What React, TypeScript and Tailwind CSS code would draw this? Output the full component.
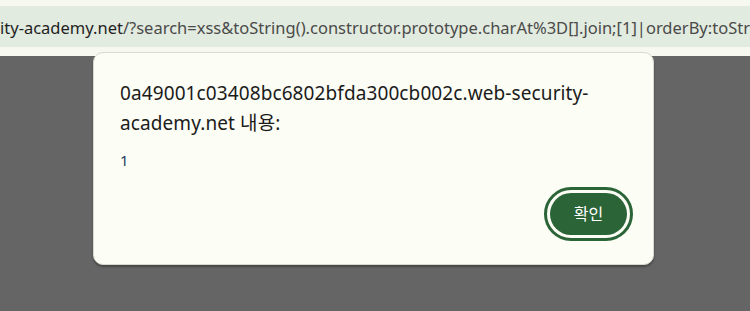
import React from 'react';

const font = '"Noto Sans", "Noto Sans CJK KR", sans-serif';

export default function App() {
  return (
    <div className="relative flex h-[311px] w-[750px] flex-col overflow-hidden bg-[#656565]" style={{ fontFamily: font }}>
      {/* browser chrome */}
      <div className="h-[6px] bg-[#f7f9f1]" />
      <div className="flex h-[41px] items-center overflow-hidden whitespace-nowrap bg-[#e2ebdf] pt-[3px] text-[16.5px]">
        <span className="text-[#1f1f1f]">ity-academy.net</span>
        <span className="text-[#4a4a4a]">/?search=xss&amp;toString().constructor.prototype.charAt%3D[].join;[1]|orderBy:toStr</span>
      </div>
      <div className="h-[9px] bg-[#f7f9f1]" />
      <div className="flex-1" />

      {/* alert dialog */}
      <div className="absolute left-[93px] top-[52px] flex h-[213px] w-[561px] flex-col rounded-[10px] border border-[#d9dacd] bg-[#fcfdf5] pl-[26px] pr-[20px] pt-[25px] pb-[23px] shadow-[0_2px_2px_rgba(0,0,0,0.3)]">
        <div className="text-[19px] leading-[30px] tracking-[0.1px] text-[#1b1b1b]">
          0a49001c03408bc6802bfda300cb002c.web-security-
          <br />
          academy.net 내용:
        </div>
        <div className="mt-[12px] text-[15px] leading-[20px] text-[#24405e]">1</div>
        <div className="mt-auto flex justify-end">
          <button className="flex h-[54px] w-[89px] items-center justify-center rounded-full border-[3px] border-[#2b6437] bg-[#fcfdf5] p-[3px]">
            <span className="flex h-full w-full items-center justify-center rounded-full bg-[#2b6437] text-[16px] text-white">확인</span>
          </button>
        </div>
      </div>
    </div>
  );
}
